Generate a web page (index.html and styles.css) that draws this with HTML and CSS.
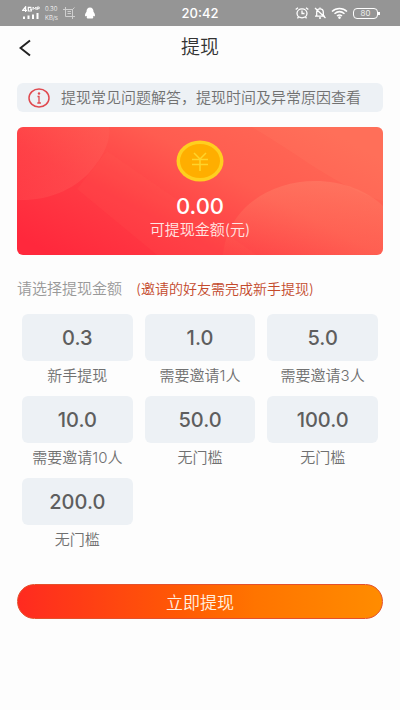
FILE: index.html
```html
<!DOCTYPE html>
<html lang="zh-CN">
<head>
<meta charset="utf-8">
<meta name="viewport" content="width=device-width, initial-scale=1">
<title>提现</title>
<link rel="stylesheet" href="styles.css">
</head>
<body>
<div class="status">
  <div class="status-side">
    <svg class="signal" width="18" height="14" viewBox="0 0 18 14" aria-hidden="true">
      <path d="M3.600 6V.8L.7 4.300H5M9.400 1.300H6.300V5h3V3.200H8" fill="none" stroke="#fff" stroke-width="1.200"/>
      <path d="M11 4V1l1.500 2L14 1v3M15.200 4V1h2v1.700h-2" fill="none" stroke="#fff" stroke-width=".9"/>
      <path d="M1 10.500h2V13H1zM5.500 9.500h2V13h-2zM10 8.500h2V13h-2zM14.500 7h2v6h-2z" fill="#fff"/>
    </svg>
    <div class="speed"><span>0.30</span><span>KB/s</span></div>
    <svg class="crop" width="12" height="12" viewBox="0 0 12 12" fill="none" stroke="#cfcfcf" aria-hidden="true">
      <path d="M0 2.500h9.500V12M2.500 0v9.500H12M4.500 4.500H8M4.500 6.500H8M9 3l2.500-2.500"/>
    </svg>
    <svg class="penguin" width="12" height="12" viewBox="0 0 12 12" aria-hidden="true">
      <path d="M6 .5c2.300 0 3.500 1.700 3.500 4.200.9 1.200 1.800 3 1.400 4.300-.3.600-.8.200-1.200-.3-.2.700-.5 1-.9 1.400.8.300.8 1.200-.3 1.300H3.500c-1.100-.1-1.100-1-.3-1.300-.4-.4-.7-.7-.9-1.400-.4.500-.9.900-1.200.3C.7 7.700 1.600 5.900 2.500 4.700 2.500 2.200 3.700.5 6 .5z" fill="#fff"/>
    </svg>
  </div>
  <time class="clock">20:42</time>
  <div class="status-side status-right">
    <svg width="14" height="12" viewBox="0 0 14 12" fill="none" stroke="#fff" stroke-width="1.300" aria-hidden="true">
      <ellipse cx="7" cy="6.300" rx="5" ry="4.500"/><path d="M7 3.500v3h2.500M.7 2.600 3 .8M13.300 2.600 11 .8M3.500 10l-1 1.300M10.500 10l1 1.300"/>
    </svg>
    <svg width="12" height="12" viewBox="0 0 12 12" fill="none" stroke="#fff" stroke-width="1.300" aria-hidden="true">
      <path d="M2.700 9V5c0-2 1.300-3.200 3.300-3.200S9.300 3 9.300 5v4M1 9.200h10M5 11h2M6 .5v1.300M1 1l10.500 10"/>
    </svg>
    <svg width="17" height="12" viewBox="0 0 17 12" fill="none" stroke="#fff" stroke-width="1.500" aria-hidden="true">
      <path d="M1 4.500c4.300-4 10.700-4 15 0M3.500 6.800c3-2.600 7-2.600 10 0M6 9c1.600-1.300 3.400-1.300 5 0"/><circle cx="8.500" cy="10.600" r=".6" fill="#fff"/>
    </svg>
    <span class="battery">80</span>
  </div>
</div>

<header class="bar">
  <button class="back" type="button" aria-label="返回">
    <svg width="12" height="18" viewBox="0 0 12 18" fill="none" stroke="#222" stroke-width="2" aria-hidden="true"><path d="M11 1.500 1.500 9l9.500 7.500"/></svg>
  </button>
  <h1>提现</h1>
</header>

<main>
  <a class="notice" href="#help">
    <svg width="22" height="20" viewBox="0 0 22 20" aria-hidden="true">
      <ellipse cx="11" cy="10" rx="10" ry="9" fill="none" stroke="#e04a50" stroke-width="1.500"/>
      <circle cx="11" cy="5.500" r="1.200" fill="#e04a50"/>
      <path d="M9.500 8.500H11V15M9.300 15h3.600" fill="none" stroke="#e04a50" stroke-width="1.300"/>
    </svg>
    <span>提现常见问题解答，提现时间及异常原因查看</span>
  </a>

  <section class="balance">
    <svg class="waves" viewBox="0 0 366 128" preserveAspectRatio="none" aria-hidden="true">
      <defs>
        <linearGradient id="bubble" x1="0" y1="0" x2="0" y2="1">
          <stop offset="0" stop-color="#ff8a70" stop-opacity=".4"/>
          <stop offset="1" stop-color="#ff7a60" stop-opacity=".08"/>
        </linearGradient>
        <linearGradient id="corner" x1="0" y1="0" x2="1" y2="1">
          <stop offset="0" stop-color="#ff6058" stop-opacity=".1"/>
          <stop offset="1" stop-color="#ff7468" stop-opacity=".3"/>
        </linearGradient>
      </defs>
      <path d="M0 0h92c2 12-4 28-20 46C54 64 30 74 0 73z" fill="url(#corner)"/>
      <path d="M90 24 240 128H140L60 62z" fill="#ff6a58" fill-opacity=".1"/>
      <path d="M235 0h131v74C320 60 280 26 235 0z" fill="#ff8a6a" fill-opacity=".16"/>
      <path d="M206 128c4-46 46-74 92-74 28 0 52 10 68 25v49z" fill="url(#bubble)"/>
    </svg>
    <svg class="coin" width="48" height="42" viewBox="0 0 48 42" aria-hidden="true">
      <ellipse cx="24" cy="21" rx="23.500" ry="20.500" fill="#ffcf1f"/>
      <ellipse cx="24" cy="21" rx="20" ry="17" fill="#ffae00"/>
      <path d="m18 13 6 6 6-6M24 19v12M16 19.500h16M16 24.500h16" fill="none" stroke="#ffd42a" stroke-width="1.500"/>
    </svg>
    <strong>0.00</strong>
    <span class="caption">可提现金额(元)</span>
  </section>

  <h2>请选择提现金额<small>(邀请的好友需完成新手提现)</small></h2>

  <div class="amounts">
    <div class="option"><button type="button" aria-describedby="d1">0.3</button><span id="d1">新手提现</span></div>
    <div class="option"><button type="button" aria-describedby="d2">1.0</button><span id="d2">需要邀请1人</span></div>
    <div class="option"><button type="button" aria-describedby="d3">5.0</button><span id="d3">需要邀请3人</span></div>
    <div class="option"><button type="button" aria-describedby="d4">10.0</button><span id="d4">需要邀请10人</span></div>
    <div class="option"><button type="button" aria-describedby="d5">50.0</button><span id="d5">无门槛</span></div>
    <div class="option"><button type="button" aria-describedby="d6">100.0</button><span id="d6">无门槛</span></div>
    <div class="option"><button type="button" aria-describedby="d7">200.0</button><span id="d7">无门槛</span></div>
  </div>

  <button class="submit" type="button">立即提现</button>
</main>
</body>
</html>
```

FILE: styles.css
```css
* {
  box-sizing: border-box;
}

body {
  margin: 0;
  background: #fdfdfd;
  color: #707070;
  font-family: Inter, "Noto Sans CJK SC", sans-serif;
  font-size: 15px;
  font-weight: 350;
}

button {
  border: 0;
  padding: 0;
  font-family: inherit;
  font-weight: inherit;
  cursor: pointer;
}

svg {
  flex: none;
}

.status {
  display: grid;
  grid-template-columns: 1fr auto 1fr;
  align-items: center;
  height: 26px;
  padding: 0 22px;
  background: #959595;
  color: #fff;
}

.status-side {
  display: flex;
  align-items: center;
  gap: 5px;
}

.status-right {
  justify-content: flex-end;
}

.speed {
  display: grid;
  gap: 1px;
  font-size: 6px;
  line-height: 8px;
}

.penguin {
  margin-left: 4px;
}

.clock {
  font-size: 13px;
  font-weight: 500;
  line-height: 26px;
}

.battery {
  position: relative;
  width: 25px;
  height: 11px;
  border: 1px solid #fff;
  border-radius: 4px;
  font-size: 8px;
  line-height: 9px;
  text-align: center;
}

.battery::after {
  content: "";
  position: absolute;
  top: 3px;
  right: -3px;
  width: 2px;
  height: 3px;
  background: #fff;
}

.bar {
  display: grid;
  grid-template-columns: 1fr auto 1fr;
  align-items: center;
  height: 44px;
  padding: 0 19px;
}

.back {
  display: flex;
  justify-self: start;
  background: none;
}

h1 {
  margin: 0;
  color: #333;
  font-size: 19px;
  font-weight: 350;
  line-height: 28px;
}

main {
  padding: 13px 17px 24px;
}

.notice {
  display: flex;
  align-items: center;
  gap: 11px;
  height: 29px;
  padding: 0 11px;
  border-radius: 6px;
  background: #edf1f5;
  color: #707070;
  line-height: 28px;
  text-decoration: none;
  white-space: nowrap;
}

.balance {
  position: relative;
  display: flex;
  flex-direction: column;
  align-items: center;
  height: 128px;
  margin-top: 15px;
  padding-top: 13px;
  border-radius: 6px;
  overflow: hidden;
  background: linear-gradient(28deg, #ff283c 6%, #ff3c44 34%, #ff5c50 60%, #ff6a56 90%);
  color: #fff;
}

.waves {
  position: absolute;
  inset: 0;
  width: 100%;
  height: 100%;
}

.coin,
.balance strong,
.caption {
  position: relative;
}

.balance strong {
  margin-top: 11px;
  font-size: 22px;
  font-weight: 500;
  line-height: 26px;
}

.caption {
  color: #ffe6e4;
  line-height: 22px;
}

h2 {
  display: flex;
  align-items: center;
  gap: 14px;
  margin: 22px 0 0;
  color: #999;
  font-size: 15px;
  font-weight: 350;
  line-height: 24px;
}

h2 small {
  color: #c44a2c;
  font-size: 14px;
}

.amounts {
  display: grid;
  grid-template-columns: repeat(3, 1fr);
  gap: 6px 12px;
  margin-top: 13px;
  padding: 0 5px;
}

.option {
  display: flex;
  flex-direction: column;
  text-align: center;
  line-height: 29px;
}

.option button {
  height: 47px;
  border-radius: 6px;
  background: #edf1f5;
  color: #5e5e5e;
  font-size: 20px;
  font-weight: 500;
}

.submit {
  display: block;
  width: 100%;
  height: 35px;
  margin-top: 30px;
  border: 1px solid #e4502c;
  border-radius: 18px;
  background: linear-gradient(90deg, #ff2a20, #ff5a04 45%, #ff7400 65%, #ff8c00);
  color: #fff0e0;
  font-size: 17px;
}
```
